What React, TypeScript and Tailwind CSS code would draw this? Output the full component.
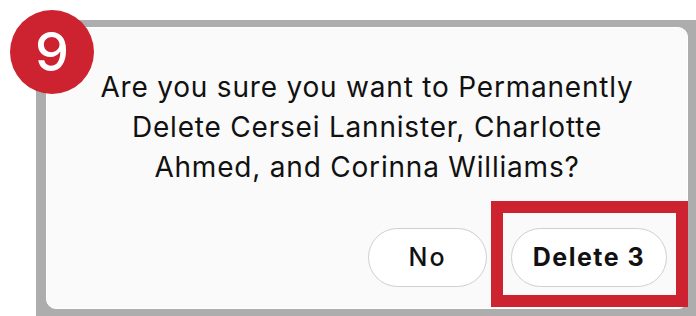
export default function App() {
  return (
    <div
      className="relative h-[316px] w-[696px] overflow-hidden bg-white"
      style={{ fontFamily: 'Inter, "Noto Sans", sans-serif' }}
    >
      {/* dimmed backdrop behind the dialog */}
      <div className="ml-[36px] mt-[20px] h-[296px] bg-[#adadad] pl-[10px] pr-[8px] pt-[7px]">
        <div className="flex h-[282px] flex-col rounded-[10px] border border-white bg-[#fafafa]">
          <p className="px-4 pt-[39px] text-center text-[28px] leading-[40px] tracking-[0.8px] text-[#111]">
            Are you sure you want to Permanently
            <br />
            Delete Cersei Lannister, Charlotte
            <br />
            Ahmed, and Corinna Williams?
          </p>
          <div className="mt-auto flex justify-end gap-[24px] pb-[21px] pr-[20px]">
            <button className="h-[59px] w-[119px] rounded-full border-[1.5px] border-[#cfcfcf] bg-white text-[25px] font-medium tracking-[2px] text-[#111]">
              No
            </button>
            <button className="h-[59px] w-[156px] rounded-full border-[1.5px] border-[#cfcfcf] bg-white text-[25px] font-bold tracking-[1.5px] text-[#111]">
              Delete 3
            </button>
          </div>
        </div>
      </div>

      {/* step badge */}
      <div className="absolute left-[10px] top-[10px] flex h-[84px] w-[84px] items-center justify-center rounded-full bg-[#cd2330] text-[54px] font-medium leading-none text-white">
        9
      </div>

      {/* highlight box */}
      <div className="absolute left-[491px] top-[201px] h-[106px] w-[197px] border-[12px] border-[#cd2330]" />
    </div>
  );
}
